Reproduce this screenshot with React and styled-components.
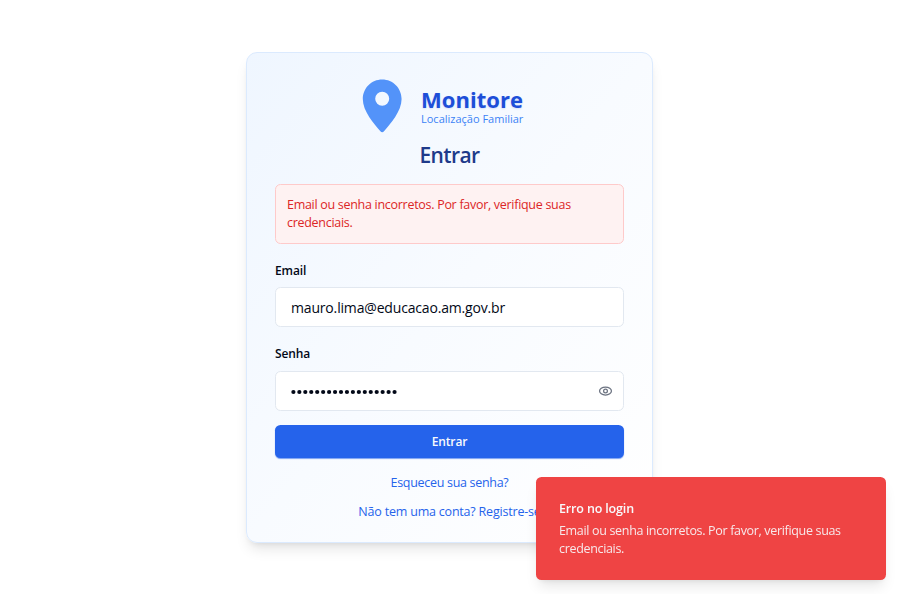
import React from "react";
import styled, { createGlobalStyle } from "styled-components";

const GlobalStyle = createGlobalStyle`
  *, *::before, *::after { box-sizing: border-box; }
  body {
    margin: 0;
    background: #fff;
    color: #020817;
    font-family: "Segoe UI", "Open Sans", "Noto Sans", sans-serif;
    overflow: hidden;
  }
  h1, h2, p { margin: 0; }
`;

const Page = styled.main`
  display: flex;
  justify-content: center;
  align-items: flex-start;
  height: 594px;
  padding: 52px 1px 0 0;
`;

const Card = styled.section`
  display: flex;
  flex-direction: column;
  width: 407px;
  height: 491px;
  padding: 26px 28px 0;
  border: 1px solid #dbeafe;
  border-radius: 11px;
  background: linear-gradient(to bottom right, #eff6ff, #f8fbff 50%, #ffffff);
  box-shadow: 0 9px 14px -3px rgba(0, 0, 0, 0.1), 0 4px 6px -4px rgba(0, 0, 0, 0.1);
`;

const Brand = styled.header`
  display: flex;
  height: 54px;
  padding-left: 87px;
  gap: 19px;
`;

const Pin = styled.svg`
  width: 40px;
  height: 54px;
  flex: none;
`;

const BrandText = styled.div`
  padding-top: 7px;
  white-space: nowrap;
`;

const BrandName = styled.h1`
  font-size: 22px;
  line-height: 26px;
  font-weight: 700;
  letter-spacing: ${(p) => p.$track}px;
  color: #1d4ed8;
  text-shadow: 0 1px 2px rgba(29, 78, 216, 0.15);
`;

const Tagline = styled.p`
  font-size: 11px;
  line-height: 13px;
  letter-spacing: ${(p) => p.$track}px;
  color: #3b82f6;
`;

const Title = styled.h2`
  height: 51px;
  padding-top: 8px;
  font-size: 21px;
  line-height: 29px;
  font-weight: 600;
  text-align: center;
  letter-spacing: ${(p) => p.$track}px;
  color: #1e3a8a;
`;

const Alert = styled.div`
  height: 60px;
  flex: none;
  padding: 11px 11px;
  border: 1px solid #fecaca;
  border-radius: 5.5px;
  background: #fef2f2;
  color: #dc2626;
`;

const Message = styled.p`
  font-size: 12.5px;
  line-height: 18px;
  letter-spacing: ${(p) => p.$track}px;
  white-space: nowrap;
`;

const Field = styled.div`
  display: flex;
  flex-direction: column;
  margin-top: 18px;
`;

const Label = styled.label`
  height: ${(p) => p.$height}px;
  font-size: 12px;
  line-height: 18px;
  font-weight: 600;
  letter-spacing: -0.1px;
`;

const InputBox = styled.div`
  display: flex;
  align-items: center;
  height: 40px;
  padding: 0 10px 0 15px;
  border: 1px solid #e2e8f0;
  border-radius: 5.5px;
  background: #fff;
`;

const Input = styled.input`
  flex: 1;
  min-width: 0;
  padding: 2px 0 0;
  border: 0;
  outline: 0;
  background: transparent;
  color: #020817;
  font-family: inherit;
  font-size: 14px;
  line-height: 20px;
  letter-spacing: ${(p) => p.$track}px;
`;

const Dots = styled.svg`
  width: 108px;
  height: 8px;
  margin-right: auto;
`;

const Eye = styled.svg`
  width: 15px;
  height: 15px;
  flex: none;
  color: #6b7280;
`;

const Submit = styled.button`
  height: 33px;
  flex: none;
  margin-top: 14px;
  padding: 0;
  border: 0;
  border-radius: 5.5px;
  background: #2563eb;
  box-shadow: 0 1px 1px rgba(37, 99, 235, 0.6);
  color: #f8fafc;
  font-family: inherit;
  font-size: 12px;
  line-height: 33px;
  font-weight: 600;
  letter-spacing: ${(p) => p.$track}px;
`;

const Links = styled.nav`
  display: flex;
  flex-direction: column;
  align-items: center;
  gap: 11px;
  margin-top: 16px;
`;

const TextLink = styled.a`
  font-size: 12.5px;
  line-height: 18px;
  letter-spacing: ${(p) => p.$track}px;
  color: #2563eb;
  white-space: nowrap;
`;

const Toast = styled.aside`
  position: fixed;
  right: 14px;
  bottom: 14px;
  width: 350px;
  height: 103px;
  padding: 23px;
  border-radius: 5.5px;
  background: #ef4444;
  box-shadow: 0 9px 14px -3px rgba(0, 0, 0, 0.1), 0 4px 6px -4px rgba(0, 0, 0, 0.1);
  color: #f8fafc;
`;

const ToastTitle = styled.p`
  height: 22px;
  font-size: 12.5px;
  line-height: 18px;
  font-weight: 600;
  letter-spacing: ${(p) => p.$track}px;
`;

const ToastBody = styled(Message)`
  opacity: 0.9;
`;

const errorLines = ["Email ou senha incorretos. Por favor, verifique suas", "credenciais."];

export default function App() {
  return (
    <>
      <GlobalStyle />
      <Page>
        <Card>
          <Brand>
            <Pin viewBox="0 0 40 54">
              <path
                fill="#5393f9"
                fillRule="evenodd"
                d="M20.2 .5C9.4 .5.8 9.2.8 20c0 12.2 11.2 24.8 17.6 32.3 1.1 1.2 2.5 1.2 3.6 0C28.4 44.8 39.6 32.2 39.6 20 39.6 9.2 31 .5 20.2 .5zM20.2 12.8a7 7 0 1 1 0 14 7 7 0 0 1 0-14z"
              />
            </Pin>
            <BrandText>
              <BrandName $track={0.05}>Monitore</BrandName>
              <Tagline $track={0}>Localização Familiar</Tagline>
            </BrandText>
          </Brand>
          <Title $track={-0.6}>Entrar</Title>
          <Alert>
            {errorLines.map((line) => (
              <Message key={line} $track={-0.29}>{line}</Message>
            ))}
          </Alert>
          <Field>
            <Label htmlFor="email" $height={25}>Email</Label>
            <InputBox>
              <Input id="email" type="text" defaultValue="mauro.lima@educacao.am.gov.br" $track={-0.17} />
            </InputBox>
          </Field>
          <Field>
            <Label $height={26}>Senha</Label>
            <InputBox>
              <Dots viewBox="0 0 108 8">
                {Array.from({ length: 18 }, (_, i) => (
                  <circle key={i} cx={2.4 + i * 5.95} cy="5" r="2.1" fill="#020817" />
                ))}
              </Dots>
              <Eye viewBox="0 0 24 24" fill="none" stroke="currentColor" strokeWidth="2" strokeLinejoin="round">
                <path d="M2.5 11.2C2.5 8 6.5 4.8 12 4.8s9.5 3.2 9.5 6.4-4 6.4-9.5 6.4-9.5-3.2-9.5-6.4Z" />
                <circle cx="12" cy="11.2" r="3" />
              </Eye>
            </InputBox>
          </Field>
          <Submit $track={-0.15}>Entrar</Submit>
          <Links>
            <TextLink $track={-0.3}>Esqueceu sua senha?</TextLink>
            <TextLink $track={-0.2}>Não tem uma conta? Registre-se</TextLink>
          </Links>
        </Card>
      </Page>
      <Toast>
        <ToastTitle $track={-0.15}>Erro no login</ToastTitle>
        {errorLines.map((line) => (
          <ToastBody key={line} $track={-0.33}>{line}</ToastBody>
        ))}
      </Toast>
    </>
  );
}
